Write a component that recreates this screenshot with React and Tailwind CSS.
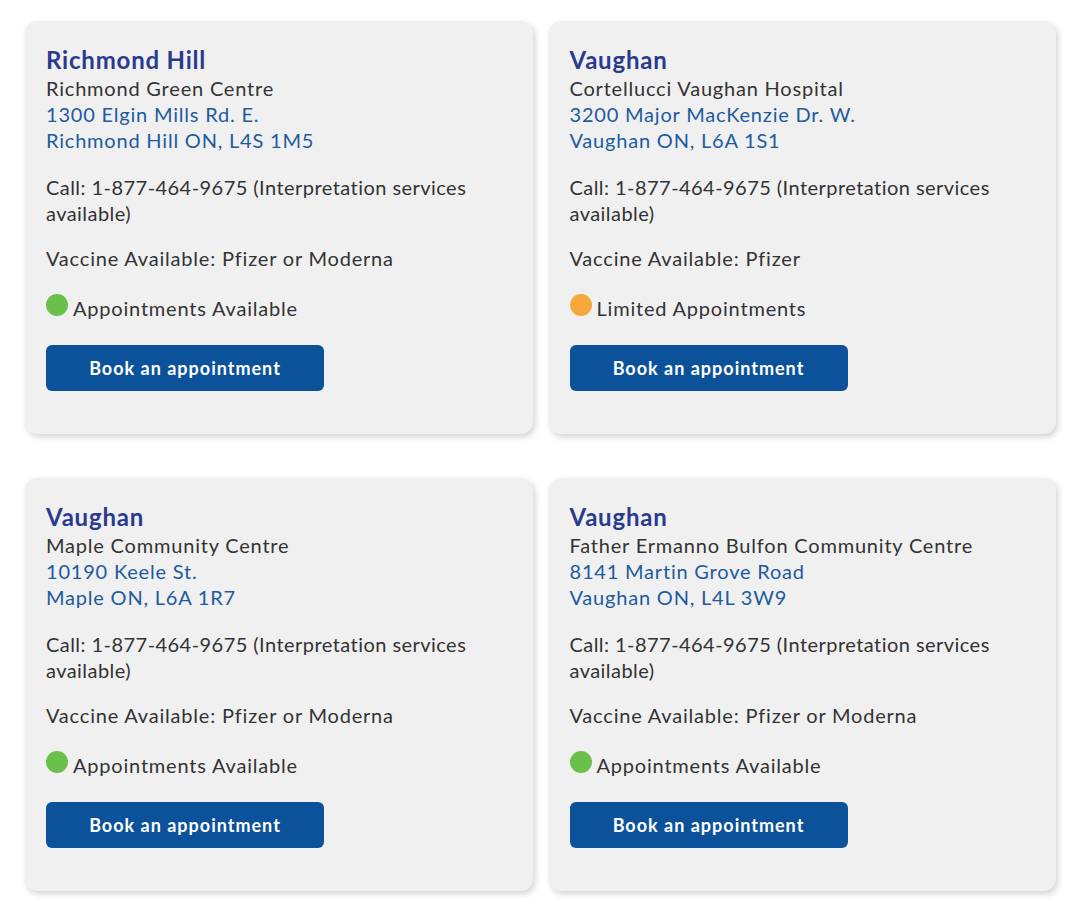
import React from 'react';

const sites = [
  {
    city: 'Richmond Hill',
    name: 'Richmond Green Centre',
    street: '1300 Elgin Mills Rd. E.',
    area: 'Richmond Hill ON, L4S 1M5',
    vaccine: 'Pfizer or Moderna',
    status: 'available',
  },
  {
    city: 'Vaughan',
    name: 'Cortellucci Vaughan Hospital',
    street: '3200 Major MacKenzie Dr. W.',
    area: 'Vaughan ON, L6A 1S1',
    vaccine: 'Pfizer',
    status: 'limited',
  },
  {
    city: 'Vaughan',
    name: 'Maple Community Centre',
    street: '10190 Keele St.',
    area: 'Maple ON, L6A 1R7',
    vaccine: 'Pfizer or Moderna',
    status: 'available',
  },
  {
    city: 'Vaughan',
    name: 'Father Ermanno Bulfon Community Centre',
    street: '8141 Martin Grove Road',
    area: 'Vaughan ON, L4L 3W9',
    vaccine: 'Pfizer or Moderna',
    status: 'available',
  },
];

const ClinicCard = ({ site }) => (
  <div className="bg-[#f0f0f1] rounded-xl shadow-[2px_3px_6px_rgba(0,0,0,0.18)] pl-[21px] pr-4 pt-[24px] pb-[43px]">
    <h3 className="text-[24px] font-bold text-[#2a3a8f] leading-[30px] tracking-[0.8px]">{site.city}</h3>
    <p className="text-[#333] leading-[26px]">{site.name}</p>
    <p className="text-[#1d5b9e] leading-[26px]">{site.street}</p>
    <p className="text-[#1d5b9e] leading-[26px]">{site.area}</p>
    <p className="text-[#333] leading-[26px] mt-[21px] tracking-[0.45px] max-w-[440px]">
      Call: 1-877-464-9675 (Interpretation services available)
    </p>
    <p className="text-[#333] leading-[26px] mt-[19px]">Vaccine Available: {site.vaccine}</p>
    <div className="flex items-center gap-[5px] mt-[24px] leading-[26px] text-[#333]">
      <span
        className={
          site.status === 'limited'
            ? 'w-[22px] h-[22px] rounded-full bg-[#f7a83c] -mt-[6px]'
            : 'w-[22px] h-[22px] rounded-full bg-[#6bbf4b] -mt-[6px]'
        }
      />
      <span>{site.status === 'limited' ? 'Limited Appointments' : 'Appointments Available'}</span>
    </div>
    <button className="mt-[24px] w-[278px] h-[46px] rounded-md bg-[#0b529b] text-white font-bold text-[18px] tracking-[1px]">
      Book an appointment
    </button>
  </div>
);

const App = () => {
  return (
    <div className="bg-white min-h-screen pl-[25px] pr-[24px] pt-[21px] font-['Lato',sans-serif] text-[20px] tracking-[0.8px]">
      <div className="grid grid-cols-2 gap-x-4 gap-y-[44px]">
        {sites.map((site, i) => (
          <ClinicCard key={i} site={site} />
        ))}
      </div>
    </div>
  );
};

export default App;
